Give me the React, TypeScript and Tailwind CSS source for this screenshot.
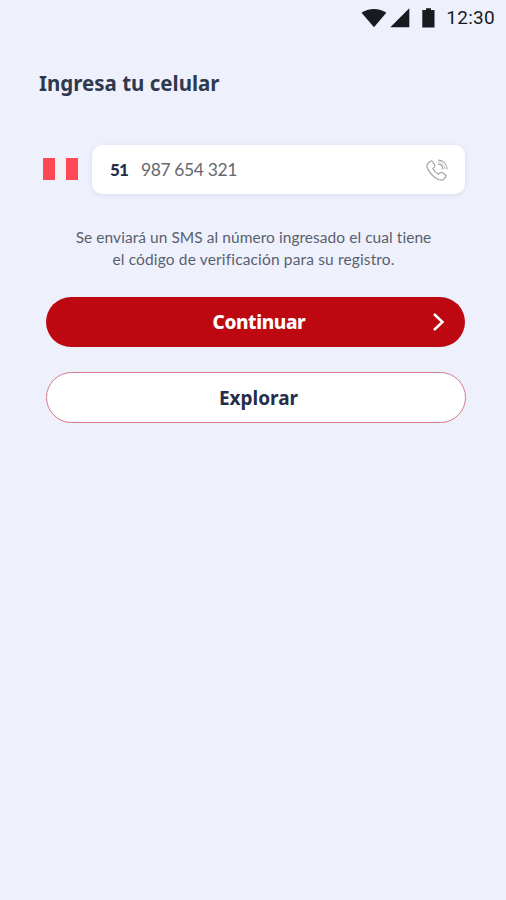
import { useState } from 'react';

function StatusBar() {
  return (
    <div className="flex h-9 items-center justify-end pr-[11px] text-[#171b1f]">
      <svg width="26" height="20" viewBox="0 0 26 20" fill="currentColor">
        <path d="M0.5 4.8C7-0.4 19-0.4 25.3 4.8L13 19.3Z" />
      </svg>
      <svg className="ml-[3px]" width="20" height="20" viewBox="0 0 20 20" fill="currentColor">
        <path d="M19.3 0.3V19.3H0.3Z" />
      </svg>
      <svg className="ml-3" width="13" height="20" viewBox="0 0 13 20" fill="currentColor">
        <path d="M4 0.3H9V2H12.5V19.5H0.3V2H4Z" />
      </svg>
      <span className="ml-[11px] font-[Roboto,sans-serif] text-[19px] leading-5 tracking-[0.3px]">12:30</span>
    </div>
  );
}

function PeruFlag() {
  return (
    <div className="mb-0.5 flex h-[22px] w-[35px]">
      <div className="flex-1 bg-[#fd4856]" />
      <div className="flex-1 bg-[#f2f0f3]" />
      <div className="flex-1 bg-[#fd4856]" />
    </div>
  );
}

function PhoneIcon() {
  return (
    <svg width="22" height="22" viewBox="0 0 22 22" fill="none" stroke="#a6a6a9" strokeWidth="1.2" strokeLinecap="round" strokeLinejoin="round">
      <path d="M4.6 2.2 2 4.2C0.6 5.5 0.6 7.8 2 10.4C4.2 14.6 7.6 18 11.8 20.2C14.2 21.4 16.4 21.5 17.8 20.2L19.6 18C20.2 17.2 20 16.4 19.3 15.8L16.1 13.6C15.3 13.1 14.6 13.2 14 13.8L12.6 15.1C10.1 14 8 11.9 6.8 9.4L8.3 8.1C9 7.4 9.1 6.7 8.6 5.9L6.6 2.7C6.1 1.9 5.3 1.7 4.6 2.2Z" />
      <path d="M12.4 5.2C14.9 5.5 16.7 7.3 17 9.9" />
      <path d="M12.6 1.2C17.4 1.6 20.7 5 21 9.8" />
      <path d="M12.5 3.2C16.2 3.5 18.7 6.2 19 9.8" strokeWidth="0.6" />
    </svg>
  );
}

export default function App() {
  const [phone] = useState('987 654 321');

  return (
    <div className="min-h-screen bg-[#eef1fc] font-[Lato,sans-serif] [font-variant-ligatures:none]">
      <StatusBar />

      <main className="pl-[39px] pr-[41px]">
        <h1 className="pt-8 font-['Noto_Sans',sans-serif] text-[20.5px] font-bold leading-[30px] text-[#30384d]">
          Ingresa tu celular
        </h1>

        <div className="mt-[47px] flex items-center pl-1">
          <PeruFlag />
          <div className="ml-3.5 flex h-[49px] flex-1 items-center rounded-[10px] bg-white pl-[18px] pr-[17px] shadow-[0_1px_5px_rgba(60,70,110,0.12)]">
            <span className="w-[31px] text-[17px] font-black tracking-[-0.8px] text-[#252c49]">51</span>
            <span className="pt-0.5 text-[17.5px] tracking-[-0.4px] text-[#67686e]">{phone}</span>
            <span className="ml-auto">
              <PhoneIcon />
            </span>
          </div>
        </div>

        <p className="mt-[33px] pl-[3px] text-center text-[15.5px] leading-[21.5px] tracking-[0.05px] text-[#5a5f6e]">
          Se enviará un SMS al número ingresado el cual tiene
          <br />
          <span className="tracking-[0.15px]">el código de verificación para su registro.</span>
        </p>

        <div className="mt-[27px] flex flex-col gap-[25px] pl-[7px]">
          <button className="relative h-[50px] rounded-full bg-[#bd0811] pl-[7px] font-['Noto_Sans',sans-serif] text-[19px] font-extrabold tracking-[-0.4px] text-white">
            Continuar
            <svg className="absolute right-[20px] top-[15px]" width="13" height="20" viewBox="0 0 13 20" fill="none" stroke="currentColor" strokeWidth="2.5">
              <path d="M2 2 10.5 10 2 18" />
            </svg>
          </button>
          <button className="-mr-px h-[51px] rounded-full border border-[#d5798c] bg-white pl-[5px] pt-px font-['Noto_Sans',sans-serif] text-[19px] font-bold text-[#252d49]">
            Explorar
          </button>
        </div>
      </main>
    </div>
  );
}
